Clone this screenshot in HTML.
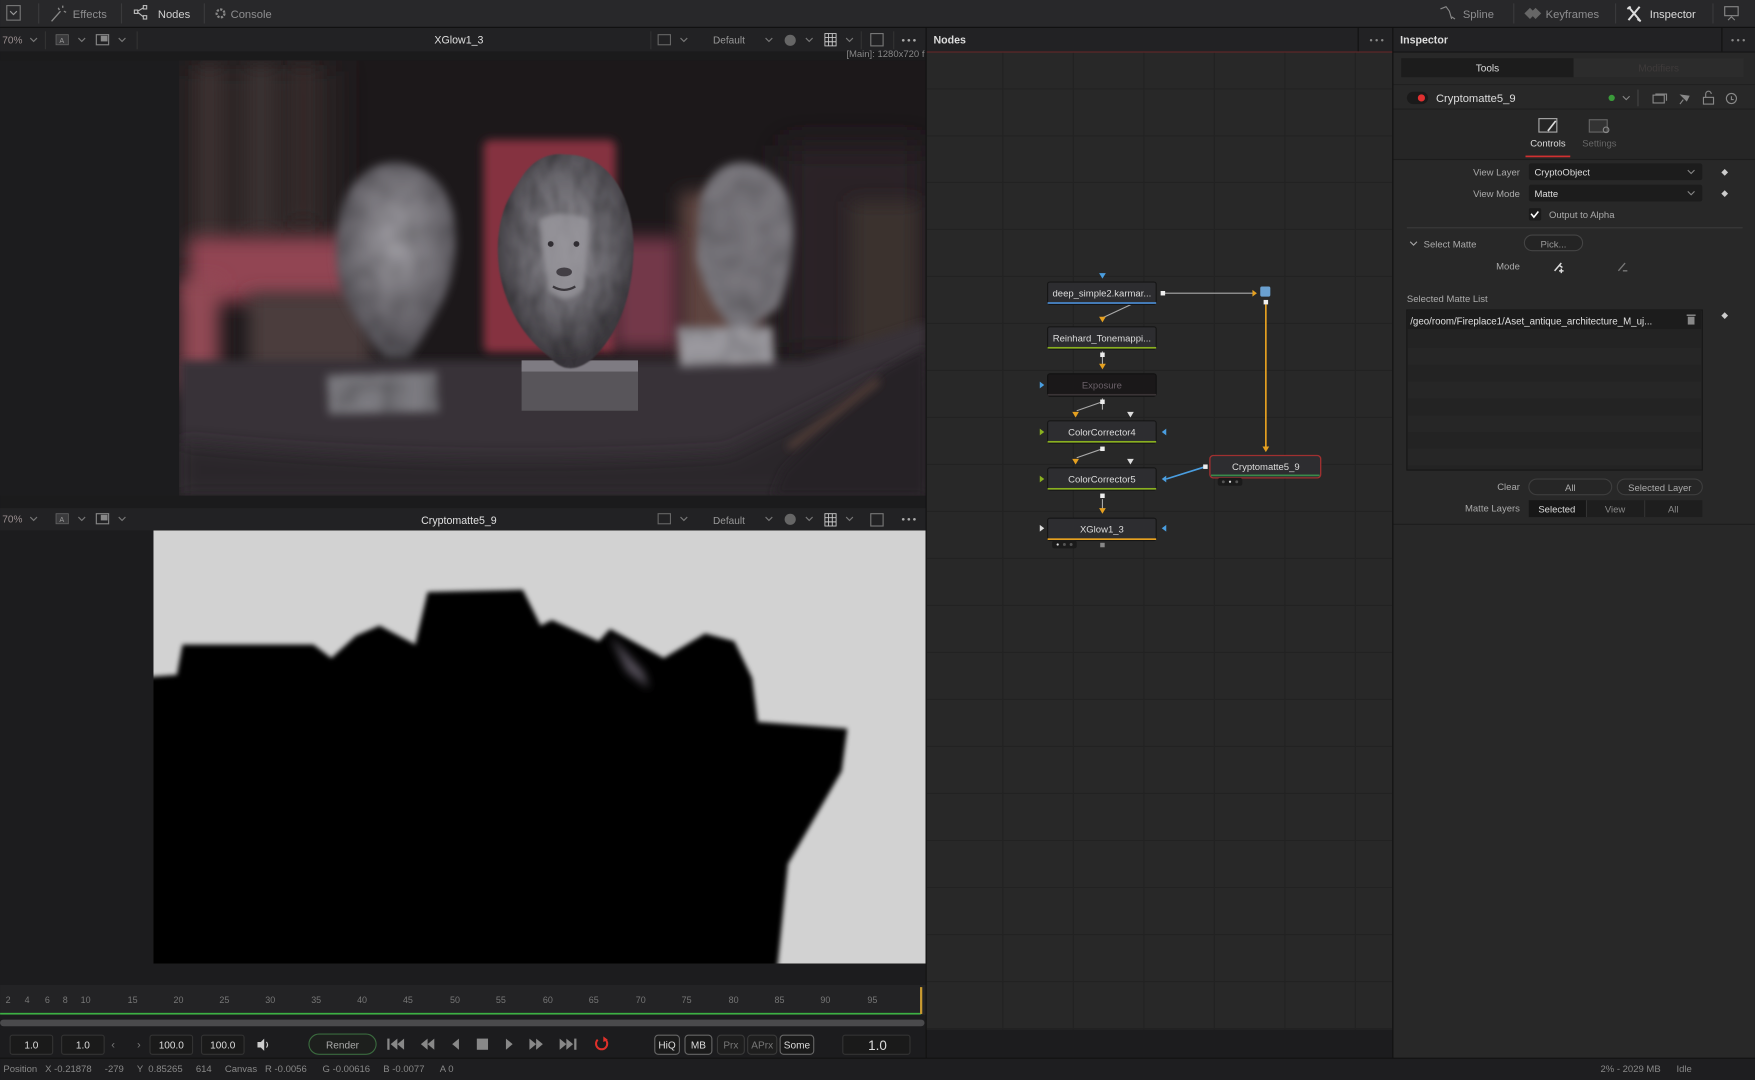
<!DOCTYPE html>
<html><head><meta charset="utf-8"><style>
html,body{margin:0;padding:0;background:#1c1c1e;overflow:hidden}
svg{display:block}
text{font-family:"Liberation Sans","DejaVu Sans",sans-serif}
</style></head><body>
<svg width="1755" height="1080" viewBox="0 0 1568 965" xmlns="http://www.w3.org/2000/svg">
<defs>
<filter id="b8" x="-50%" y="-50%" width="200%" height="200%"><feGaussianBlur stdDeviation="8"/></filter>
<filter id="b4" x="-50%" y="-50%" width="200%" height="200%"><feGaussianBlur stdDeviation="4"/></filter>
<filter id="b2" x="-20%" y="-20%" width="140%" height="140%"><feGaussianBlur stdDeviation="2.2"/></filter>
<filter id="b15" x="-50%" y="-50%" width="200%" height="200%"><feGaussianBlur stdDeviation="15"/></filter>
<filter id="tex" x="-10%" y="-10%" width="120%" height="120%">
<feTurbulence type="fractalNoise" baseFrequency="0.07 0.04" numOctaves="2" seed="3" result="n"/>
<feColorMatrix in="n" type="matrix" values="0 0 0 0 0  0 0 0 0 0  0 0 0 0 0  0 0 0 -0.9 0.55" result="a"/>
<feComposite in="a" in2="SourceAlpha" operator="in" result="sh"/>
<feMerge result="m"><feMergeNode in="SourceGraphic"/><feMergeNode in="sh"/></feMerge>
<feGaussianBlur in="m" stdDeviation="0.8"/>
</filter>
<filter id="texb" x="-20%" y="-20%" width="140%" height="140%">
<feTurbulence type="fractalNoise" baseFrequency="0.05" numOctaves="2" seed="7" result="n"/>
<feColorMatrix in="n" type="matrix" values="0 0 0 0 0  0 0 0 0 0  0 0 0 0 0  0 0 0 -0.9 0.55" result="a"/>
<feComposite in="a" in2="SourceAlpha" operator="in" result="sh"/>
<feMerge result="m"><feMergeNode in="SourceGraphic"/><feMergeNode in="sh"/></feMerge>
<feGaussianBlur in="m" stdDeviation="4"/>
</filter>
<clipPath id="ph"><rect x="160" y="54" width="667" height="389"/></clipPath>
<clipPath id="mt"><rect x="137" y="474" width="690" height="387"/></clipPath>
<radialGradient id="lion" cx="50%" cy="42%" r="55%"><stop offset="0" stop-color="#8e8c92"/><stop offset="0.6" stop-color="#67656b"/><stop offset="1" stop-color="#3a373c"/></radialGradient>
<radialGradient id="lionb" cx="50%" cy="40%" r="55%"><stop offset="0" stop-color="#a09ea4"/><stop offset="1" stop-color="#57545a"/></radialGradient>
</defs>

<rect width="1568" height="965" fill="#1c1c1e"/>

<!-- top toolbar -->
<rect x="0" y="0" width="1568" height="24" fill="#28282a"/>
<rect x="0" y="24" width="1568" height="1" fill="#111"/>
<rect x="6" y="5" width="12" height="13" fill="none" stroke="#777" stroke-width="1"/>
<path d="M9 10l3 3l3-3" stroke="#999" fill="none"/>
<rect x="34" y="3" width="1" height="18" fill="#3a3a3c"/>
<path d="M46 19l8-9M52 7l1 2M57 10l2 1M56 5v2" stroke="#888" stroke-width="1.2" fill="none"/>
<text x="65" y="16" font-size="10" fill="#8e8e90">Effects</text>
<rect x="108" y="3" width="1" height="18" fill="#3a3a3c"/>
<g stroke="#bbb" fill="none" stroke-width="1"><rect x="120" y="9" width="3" height="3"/><rect x="128" y="5" width="3" height="3"/><rect x="128" y="14" width="3" height="3"/><path d="M123 10l5-3M123 11l5 4"/></g>
<text x="141" y="16" font-size="10" fill="#d0d0d0">Nodes</text>
<rect x="182" y="3" width="1" height="18" fill="#3a3a3c"/>
<circle cx="197" cy="12" r="3.5" fill="none" stroke="#888" stroke-width="2" stroke-dasharray="2 1.2"/>
<text x="206" y="16" font-size="10" fill="#8e8e90">Console</text>

<path d="M1287 8l5-2l3 4l2 7M1297 15l3 2" stroke="#888" fill="none"/>
<text x="1307" y="16" font-size="10" fill="#8e8e90">Spline</text>
<rect x="1352" y="3" width="1" height="18" fill="#3a3a3c"/>
<path d="M1362 12l5-5l5 5l-5 5zM1367 12l5-5l5 5l-5 5z" fill="#666"/>
<text x="1381" y="16" font-size="10" fill="#8e8e90">Keyframes</text>
<rect x="1443" y="3" width="1" height="18" fill="#3a3a3c"/>
<path d="M1455 6l10 12M1465 6l-10 12M1454 8l3-2M1463 17l3 2" stroke="#ddd" stroke-width="1.8" fill="none"/>
<text x="1474" y="16" font-size="10" fill="#dcdcdc">Inspector</text>
<rect x="1530" y="3" width="1" height="18" fill="#3a3a3c"/>
<rect x="1541" y="6" width="12" height="8" fill="none" stroke="#888"/><path d="M1544 18l3-3l3 3" stroke="#888" fill="none"/>

<!-- viewer 1 header -->
<rect x="0" y="25" width="827" height="21" fill="#222224"/>
<rect x="0" y="46" width="827" height="8" fill="#1b1b1c"/>
<text x="2" y="39" font-size="9" fill="#9a8f90">70%</text>
<path d="M27 34l3 3l3-3" stroke="#777" fill="none"/>
<rect x="40" y="28" width="1" height="16" fill="#333"/>
<rect x="50" y="31" width="11" height="9" fill="#3a3a3c" stroke="#666" stroke-width=".7"/><text x="53" y="38.5" font-size="6.5" fill="#999">A</text>
<path d="M70 34l3 3l3-3" stroke="#777" fill="none"/>
<rect x="86" y="31" width="11" height="9" fill="none" stroke="#888"/><rect x="90" y="32" width="6" height="5" fill="#888"/>
<path d="M106 34l3 3l3-3" stroke="#777" fill="none"/>
<rect x="122" y="28" width="1" height="16" fill="#333"/>
<text x="410" y="39" font-size="9.5" fill="#e0e0e0" text-anchor="middle">XGlow1_3</text>
<rect x="581" y="28" width="1" height="16" fill="#333"/>
<rect x="588" y="31" width="11" height="9" fill="none" stroke="#666"/>
<path d="M608 34l3 3l3-3" stroke="#777" fill="none"/>
<text x="637" y="39" font-size="9" fill="#999">Default</text>
<path d="M684 34l3 3l3-3" stroke="#777" fill="none"/>
<circle cx="706" cy="36" r="5" fill="#666"/>
<path d="M720 34l3 3l3-3" stroke="#777" fill="none"/>
<g stroke="#ccc" stroke-width=".8" fill="none"><rect x="737" y="30" width="10" height="11"/><path d="M740.3 30v11M743.6 30v11M737 33.6h10M737 37.3h10"/></g>
<path d="M756 34l3 3l3-3" stroke="#777" fill="none"/>
<rect x="769" y="28" width="1" height="16" fill="#333"/>
<rect x="778" y="30" width="11" height="11" fill="none" stroke="#777"/>
<rect x="798" y="28" width="1" height="16" fill="#333"/>
<g fill="#aaa"><circle cx="807" cy="36" r="1.2"/><circle cx="812" cy="36" r="1.2"/><circle cx="817" cy="36" r="1.2"/></g>
<text x="826" y="51" font-size="8.5" fill="#888" text-anchor="end">[Main]: 1280x720 f</text>

<!-- photo -->
<g clip-path="url(#ph)">
<rect x="160" y="54" width="667" height="389" fill="#1c181a"/>
<rect x="160" y="54" width="140" height="190" fill="#2e2628" filter="url(#b15)"/>
<rect x="178" y="58" width="18" height="160" fill="#3c3232" filter="url(#b8)"/>
<rect x="222" y="58" width="22" height="150" fill="#3a3030" filter="url(#b8)"/>
<rect x="262" y="58" width="18" height="140" fill="#342b2c" filter="url(#b8)"/>
<rect x="700" y="130" width="127" height="190" fill="#2c2426" filter="url(#b15)"/>
<rect x="608" y="172" width="72" height="150" fill="#5e443f" filter="url(#b8)"/>
<rect x="760" y="180" width="60" height="140" fill="#3a302f" filter="url(#b8)"/>
<rect x="432" y="125" width="118" height="190" rx="6" fill="#85303f" filter="url(#b4)"/>
<rect x="168" y="212" width="165" height="58" rx="6" fill="#924452" filter="url(#b8)"/>
<rect x="160" y="250" width="36" height="100" fill="#924a55" filter="url(#b8)"/>
<rect x="222" y="262" width="110" height="75" fill="#4c3e3d" filter="url(#b8)"/>
<rect x="548" y="212" width="58" height="100" fill="#73394a" filter="url(#b8)"/>
<path d="M160 322 L720 322 L827 288 L827 443 L160 443 Z" fill="#373039" filter="url(#b4)"/>
<path d="M160 395 Q400 420 650 405 L780 340 L827 330 L827 443 L160 443 Z" fill="#2c252b" filter="url(#b8)"/>
<path d="M700 420 L790 330 L827 310 L827 443 L690 443 Z" fill="#282226" filter="url(#b4)"/>
<path d="M705 400 L785 340" stroke="#5e443b" stroke-width="5" filter="url(#b4)"/>
<g filter="url(#texb)">
<path d="M305 185 Q320 145 355 145 Q395 150 405 190 Q412 235 395 270 Q380 300 365 320 L345 320 Q320 295 305 260 Q295 225 305 185Z" fill="url(#lionb)"/>
<path d="M292 335 L390 332 L392 368 L294 370 Z" fill="#7c7a80"/>
</g>
<g filter="url(#texb)">
<path d="M625 180 Q635 145 665 145 Q700 150 708 190 Q712 235 695 275 L660 300 Q630 270 622 230Z" fill="#78767c"/>
<path d="M605 292 L690 292 L692 325 L608 328Z" fill="#9a989e"/>
</g>
<rect x="466" y="325" width="104" height="42" fill="#58555a"/>
<rect x="466" y="322" width="104" height="10" fill="#7e7b82"/>
<g filter="url(#tex)">
<path d="M462 165 Q478 135 505 138 Q535 138 552 165 Q570 195 565 240 Q560 290 530 320 Q508 338 492 320 Q455 292 446 242 Q440 195 462 165Z" fill="url(#lion)"/>
</g>
<path d="M482 196 Q502 186 526 196 L522 258 Q506 274 490 260 Z" fill="#9a989e" opacity=".75" filter="url(#b2)"/>
<circle cx="492" cy="218" r="2.6" fill="#302d32"/><circle cx="515" cy="218" r="2.6" fill="#302d32"/>
<ellipse cx="504" cy="243" rx="7" ry="4" fill="#433f45"/>
<path d="M494 256 Q504 262 514 256" stroke="#3a373c" stroke-width="2" fill="none"/>
</g>

<!-- viewer 2 header -->
<rect x="0" y="443" width="827" height="11" fill="#1b1b1c"/>
<rect x="0" y="454" width="827" height="20" fill="#222224"/>
<text x="2" y="467" font-size="9" fill="#9a8f90">70%</text>
<path d="M27 462l3 3l3-3" stroke="#777" fill="none"/>
<rect x="50" y="459" width="11" height="9" fill="#3a3a3c" stroke="#666" stroke-width=".7"/><text x="53" y="466.5" font-size="6.5" fill="#999">A</text>
<path d="M70 462l3 3l3-3" stroke="#777" fill="none"/>
<rect x="86" y="459" width="11" height="9" fill="none" stroke="#888"/><rect x="90" y="460" width="6" height="5" fill="#888"/>
<path d="M106 462l3 3l3-3" stroke="#777" fill="none"/>
<text x="410" y="468" font-size="9.5" fill="#e0e0e0" text-anchor="middle">Cryptomatte5_9</text>
<rect x="588" y="459" width="11" height="9" fill="none" stroke="#666"/>
<path d="M608 462l3 3l3-3" stroke="#777" fill="none"/>
<text x="637" y="468" font-size="9" fill="#999">Default</text>
<path d="M684 462l3 3l3-3" stroke="#777" fill="none"/>
<circle cx="706" cy="464" r="5" fill="#666"/>
<path d="M720 462l3 3l3-3" stroke="#777" fill="none"/>
<g stroke="#ccc" stroke-width=".8" fill="none"><rect x="737" y="459" width="10" height="11"/><path d="M740.3 459v11M743.6 459v11M737 462.6h10M737 466.3h10"/></g>
<path d="M756 462l3 3l3-3" stroke="#777" fill="none"/>
<rect x="778" y="459" width="11" height="11" fill="none" stroke="#777"/>
<g fill="#aaa"><circle cx="807" cy="464" r="1.2"/><circle cx="812" cy="464" r="1.2"/><circle cx="817" cy="464" r="1.2"/></g>

<!-- matte -->
<g clip-path="url(#mt)">
<rect x="137" y="474" width="690" height="387" fill="#d2d2d2"/>
<path d="M130 605 L158 603 L163 576 L280 576 L296 588 L318 568 L339 559 L371 576 L382 529 L467 527 L483 559 L493 554 L535 573 L545 562 L593 588 L630 566 L656 573 L672 606 L677 645 L757 651 L752 689 L704 772 L694 870 L130 870 Z" fill="#000" filter="url(#b2)"/>
<path d="M545 568 L575 600 L580 615 L560 600 Z" fill="#55505a" filter="url(#b4)"/>
</g>

<!-- timeline -->
<rect x="0" y="861" width="827" height="19" fill="#1c1c1e"/>
<rect x="0" y="880" width="827" height="27" fill="#232325"/>
<g font-size="8" fill="#777">
<text x="5" y="896">2</text><text x="22" y="896">4</text><text x="40" y="896">6</text><text x="56" y="896">8</text>
<text x="72" y="896">10</text><text x="114" y="896">15</text><text x="155" y="896">20</text><text x="196" y="896">25</text>
<text x="237" y="896">30</text><text x="319" y="896">40</text><text x="278" y="896">35</text><text x="360" y="896">45</text>
<text x="402" y="896">50</text><text x="443" y="896">55</text><text x="485" y="896">60</text><text x="526" y="896">65</text>
<text x="568" y="896">70</text><text x="609" y="896">75</text><text x="651" y="896">80</text><text x="692" y="896">85</text>
<text x="733" y="896">90</text><text x="775" y="896">95</text>
</g>
<rect x="0" y="905" width="823" height="1.5" fill="#3cb043"/>
<rect x="822" y="882" width="2" height="24" fill="#c89a30"/>
<rect x="0" y="911" width="826" height="6" rx="3" fill="#4a4a4c"/>
<rect x="0" y="920" width="1244" height="25" fill="#1c1c1e"/>
<g fill="#1a1a1a" stroke="#333">
<rect x="9" y="925" width="38" height="17" rx="2"/><rect x="55" y="925" width="38" height="17" rx="2"/>
<rect x="134" y="925" width="38" height="17" rx="2"/><rect x="180" y="925" width="38" height="17" rx="2"/>
<rect x="753" y="925" width="60" height="17" rx="2"/>
</g>
<g font-size="9" fill="#ddd" text-anchor="middle">
<text x="28" y="937">1.0</text><text x="74" y="937">1.0</text><text x="153" y="937">100.0</text><text x="199" y="937">100.0</text>
</g>
<text x="784" y="938" font-size="12" fill="#ddd" text-anchor="middle">1.0</text>
<text x="101" y="937" font-size="10" fill="#777" text-anchor="middle">‹</text><text x="124" y="937" font-size="10" fill="#777" text-anchor="middle">›</text>
<path d="M230 931h3l3-3v11l-3-3h-3z" fill="#ccc"/><path d="M238 931q2 2.5 0 5" stroke="#ccc" fill="none"/>
<rect x="276" y="924" width="60" height="18" rx="9" fill="#1d1f1d" stroke="#3a6a3e"/>
<text x="306" y="937" font-size="9" fill="#aaa" text-anchor="middle">Render</text>
<g fill="#888">
<rect x="346" y="928" width="2" height="10"/><path d="M355 928v10l-6-5zM361 928v10l-6-5z"/>
<path d="M382 928v10l-6-5zM388 928v10l-6-5z"/>
<path d="M410 928v10l-6-5z"/>
<rect x="426" y="928" width="10" height="10"/>
<path d="M452 928v10l6-5z"/>
<path d="M473 928v10l6-5zM479 928v10l6-5z"/>
<path d="M500 928v10l6-5zM506 928v10l6-5z"/><rect x="513" y="928" width="2" height="10"/>
</g>
<path d="M541 929a5 5 0 1 1 -7 0" stroke="#e0302a" stroke-width="1.8" fill="none"/><path d="M539 926l4 3l-4 2z" fill="#e0302a"/>
<g font-size="9" text-anchor="middle">
<rect x="585" y="925" width="22" height="17" rx="3" fill="#1a1a1a" stroke="#666"/><text x="596" y="937" fill="#ddd">HiQ</text>
<rect x="612" y="925" width="24" height="17" rx="3" fill="#1a1a1a" stroke="#666"/><text x="624" y="937" fill="#ddd">MB</text>
<rect x="641" y="925" width="24" height="17" rx="3" fill="#1e1e1e" stroke="#3a3a3a"/><text x="653" y="937" fill="#777">Prx</text>
<rect x="668" y="925" width="26" height="17" rx="3" fill="#1e1e1e" stroke="#3a3a3a"/><text x="681" y="937" fill="#777">APrx</text>
<rect x="697" y="925" width="30" height="17" rx="3" fill="#1a1a1a" stroke="#666"/><text x="712" y="937" fill="#ddd">Some</text>
</g>

<!-- status bar -->
<rect x="0" y="945" width="1568" height="20" fill="#1e1e20"/>
<rect x="0" y="945" width="1568" height="1" fill="#111"/>
<text x="3" y="958" font-size="8.5" fill="#888" xml:space="preserve">Position   X -0.21878     -279     Y  0.85265     614     Canvas   R -0.0056      G -0.00616     B -0.0077      A 0</text>
<text x="1430" y="958" font-size="8.5" fill="#888" xml:space="preserve">2% - 2029 MB      Idle</text>

<!-- Nodes panel -->
<rect x="827" y="25" width="1" height="920" fill="#111"/>
<rect x="828" y="25" width="416" height="21" fill="#222224"/>
<rect x="828" y="46" width="416" height="1" fill="#6a2a2a"/>
<text x="834" y="39" font-size="9.5" font-weight="bold" fill="#ddd">Nodes</text>
<rect x="1213" y="25" width="1" height="21" fill="#111"/>
<g fill="#888"><circle cx="1225" cy="36" r="1.1"/><circle cx="1230" cy="36" r="1.1"/><circle cx="1235" cy="36" r="1.1"/></g>
<rect x="828" y="47" width="416" height="873" fill="#282828"/>
<g stroke="#222" stroke-width="1">
<path d="M896 47v873M959 47v873M1022 47v873M1085 47v873M1148 47v873M1211 47v873"/>
<path d="M828 79.5h416M828 121.5h416M828 163h416M828 205h416M828 247h416M828 289h416M828 331h416M828 373h416M828 415h416M828 457h416M828 499h416M828 541h416M828 583h416M828 625h416M828 667h416M828 709h416M828 751h416M828 793h416M828 835h416M828 877h416M828 919h416"/>
</g>
<path d="M1039 262H1120" stroke="#aaa" stroke-width="1"/><path d="M1119 259l4 3l-4 3z" fill="#e5a020"/>
<path d="M1013 271L985 284" stroke="#aaa"/>
<path d="M985 314v12M985 356v10" stroke="#aaa"/>
<path d="M985 359L962 367" stroke="#aaa"/><path d="M985 401L962 409" stroke="#aaa"/>
<path d="M985 446v12" stroke="#aaa"/>
<path d="M1131 272v130" stroke="#e5a020" stroke-width="1.5"/>
<path d="M1077 417L1042 428" stroke="#4a9ee0" stroke-width="1.5"/>
<g fill="#e5a020">
<path d="M982 283h6l-3 5z"/><path d="M982 325h6l-3 5z"/><path d="M958 368h6l-3 5z"/><path d="M958 410h6l-3 5z"/><path d="M982 454h6l-3 5z"/><path d="M1128 399h6l-3 5z"/>
</g>
<g fill="#ddd"><path d="M1007 368h6l-3 5z"/><path d="M1007 410h6l-3 5z"/><path d="M929 469v6l4-3z"/></g>
<path d="M982 244h6l-3 5z" fill="#4a9ee0"/>
<g fill="#4a9ee0"><path d="M929 341v6l4-3z"/><path d="M1042 383v6l-4-3z"/><path d="M1042 425v6l-4-3z"/><path d="M1042 469v6l-4-3z"/></g>
<g fill="#8ab020"><path d="M929 383v6l4-3z"/><path d="M929 425v6l4-3z"/></g>
<g font-size="8.5" text-anchor="middle">
<rect x="936" y="252" width="97" height="20" rx="2" fill="#2d2d30" stroke="#151515"/><rect x="936" y="270" width="97" height="1.5" fill="#4a8ad0"/>
<text x="984.5" y="265" fill="#ddd">deep_simple2.karmar...</text>
<rect x="936" y="292" width="97" height="20" rx="2" fill="#2d2d30" stroke="#151515"/><rect x="936" y="310" width="97" height="1.5" fill="#8ab020"/>
<text x="984.5" y="305" fill="#ddd">Reinhard_Tonemappi...</text>
<rect x="936" y="334" width="97" height="20" rx="2" fill="#1a1819" stroke="#111"/><rect x="936" y="352" width="97" height="1.5" fill="#3a3436"/>
<text x="984.5" y="347" fill="#6a6068">Exposure</text>
<rect x="936" y="376" width="97" height="20" rx="2" fill="#2d2d30" stroke="#151515"/><rect x="936" y="394" width="97" height="1.5" fill="#8ab020"/>
<text x="984.5" y="389" fill="#ddd">ColorCorrector4</text>
<rect x="936" y="418" width="97" height="20" rx="2" fill="#2d2d30" stroke="#151515"/><rect x="936" y="436" width="97" height="1.5" fill="#8ab020"/>
<text x="984.5" y="431" fill="#ddd">ColorCorrector5</text>
<rect x="936" y="463" width="97" height="20" rx="2" fill="#2d2d30" stroke="#151515"/><rect x="936" y="481" width="97" height="1.5" fill="#e5a020"/>
<text x="984.5" y="476" fill="#ddd">XGlow1_3</text>
<rect x="1081" y="407" width="99" height="20" rx="3" fill="#2d2d30" stroke="#a03030" stroke-width="1.2"/><rect x="1082" y="424" width="97" height="1.5" fill="#3a8a4a"/>
<text x="1131" y="420" fill="#ddd">Cryptomatte5_9</text>
</g>
<g fill="#eee">
<rect x="1037" y="260" width="4" height="4"/><rect x="983" y="315" width="4" height="4"/><rect x="983" y="357" width="4" height="4"/>
<rect x="983" y="399" width="4" height="4"/><rect x="983" y="441" width="4" height="4"/><rect x="1129" y="268" width="4" height="4"/><rect x="1075" y="415" width="4" height="4"/>
</g>
<rect x="983" y="485" width="4" height="4" fill="#888"/>
<rect x="1126" y="256" width="9" height="9" rx="1.5" fill="#6aa0d0"/>
<rect x="940" y="483" width="22" height="7" rx="2" fill="#1a1a1a"/><circle cx="945" cy="486.5" r="1" fill="#ddd"/><g fill="#555"><circle cx="951" cy="486.5" r="1.3"/><circle cx="957" cy="486.5" r="1.3"/></g>
<rect x="1088" y="427" width="22" height="7" rx="2" fill="#1a1a1a"/><g fill="#555"><circle cx="1093" cy="430.5" r="1.3"/><circle cx="1105" cy="430.5" r="1.3"/></g><circle cx="1099" cy="430.5" r="1" fill="#ddd"/>

<!-- Inspector -->
<rect x="1244" y="25" width="1" height="920" fill="#111"/>
<rect x="1245" y="25" width="323" height="920" fill="#282828"/>
<rect x="1245" y="25" width="323" height="21" fill="#222224"/>
<rect x="1245" y="46" width="323" height="1" fill="#161616"/>
<text x="1251" y="39" font-size="9.5" font-weight="bold" fill="#ddd">Inspector</text>
<rect x="1538" y="25" width="1" height="21" fill="#111"/>
<g fill="#888"><circle cx="1548" cy="36" r="1.1"/><circle cx="1553" cy="36" r="1.1"/><circle cx="1558" cy="36" r="1.1"/></g>
<rect x="1252" y="52" width="154" height="17" fill="#1c1c1c"/>
<rect x="1406" y="52" width="152" height="17" fill="#2c2c2c"/>
<text x="1329" y="64" font-size="9" fill="#ddd" text-anchor="middle">Tools</text>
<text x="1482" y="64" font-size="9" fill="#3e3a3a" text-anchor="middle">Modifiers</text>
<rect x="1245" y="75" width="323" height="1" fill="#202020"/>
<rect x="1257" y="82" width="19" height="11" rx="5.5" fill="#1a1a1a"/><circle cx="1270" cy="87.5" r="3.2" fill="#e03030"/>
<text x="1283" y="91" font-size="10" fill="#ddd">Cryptomatte5_9</text>
<circle cx="1440" cy="87.5" r="2.8" fill="#3a9a3a"/><path d="M1450 86l3 3l3-3" stroke="#888" fill="none"/>
<rect x="1463" y="80" width="1" height="15" fill="#444"/>
<rect x="1477" y="85" width="10" height="7" fill="none" stroke="#888"/><path d="M1479 84h10v6" stroke="#888" fill="none"/>
<path d="M1501 93l3-4M1502 85l5 5l2-4z" stroke="#888" fill="#888"/>
<rect x="1522" y="87" width="9" height="6" fill="none" stroke="#888"/><path d="M1524 87v-3a2.5 2.5 0 0 1 5 0" stroke="#888" fill="none"/>
<circle cx="1547" cy="88" r="4.5" fill="none" stroke="#888"/><path d="M1547 86v3h2" stroke="#888" fill="none"/>
<rect x="1245" y="97" width="323" height="1" fill="#1e1e1e"/>
<rect x="1245" y="98" width="323" height="44" fill="#262626"/>
<rect x="1375" y="106" width="16" height="12" fill="none" stroke="#aaa"/><path d="M1383 117l7-9" stroke="#ddd" stroke-width="1.5"/>
<text x="1383" y="131" font-size="8.5" fill="#ddd" text-anchor="middle">Controls</text>
<rect x="1363" y="139" width="40" height="1.5" fill="#d03030"/>
<rect x="1420" y="107" width="16" height="11" fill="#333" stroke="#666"/><circle cx="1435" cy="116" r="2.5" fill="none" stroke="#888"/>
<text x="1429" y="131" font-size="8.5" fill="#666" text-anchor="middle">Settings</text>
<rect x="1245" y="142" width="323" height="1" fill="#1c1c1c"/>
<g font-size="8.5" fill="#aaa" text-anchor="end">
<text x="1358" y="157">View Layer</text><text x="1358" y="176">View Mode</text><text x="1358" y="241">Mode</text>
<text x="1358" y="438">Clear</text><text x="1358" y="457">Matte Layers</text>
</g>
<rect x="1366" y="146" width="155" height="15" rx="2" fill="#1c1c1c"/><text x="1371" y="157" font-size="8.5" fill="#ddd">CryptoObject</text><path d="M1508 152l3 3l3-3" stroke="#888" fill="none"/>
<rect x="1366" y="165" width="155" height="15" rx="2" fill="#1c1c1c"/><text x="1371" y="176" font-size="8.5" fill="#ddd">Matte</text><path d="M1508 171l3 3l3-3" stroke="#888" fill="none"/>
<g fill="#ccc"><path d="M1541 151l3 3l-3 3l-3-3z"/><path d="M1541 170l3 3l-3 3l-3-3z"/><path d="M1541 279l3 3l-3 3l-3-3z"/></g>
<rect x="1366" y="186" width="11" height="11" rx="1.5" fill="#1a1a1a"/><path d="M1368 191l2.5 3l4-5" stroke="#fff" stroke-width="1.4" fill="none"/>
<text x="1384" y="195" font-size="8.5" fill="#aaa">Output to Alpha</text>
<rect x="1257" y="203" width="300" height="1" fill="#3a3a3a"/>
<path d="M1260 216l3 3l3-3" stroke="#aaa" fill="none"/>
<text x="1272" y="221" font-size="8.5" fill="#aaa">Select Matte</text>
<rect x="1362" y="210" width="52" height="14" rx="7" fill="#242424" stroke="#444"/>
<text x="1388" y="221" font-size="8.5" fill="#999" text-anchor="middle">Pick...</text>
<path d="M1389 242l6-7M1393 237l3 2M1395 240v4M1393 242h4" stroke="#ddd" stroke-width="1.3" fill="none"/>
<path d="M1446 242l6-7M1450 242h4" stroke="#777" stroke-width="1.2" fill="none"/>
<text x="1257" y="270" font-size="8.5" fill="#aaa">Selected Matte List</text>
<rect x="1257" y="277" width="264" height="143" fill="#232323" stroke="#161616"/>
<rect x="1258" y="278" width="262" height="16" fill="#1c1c1c"/>
<g fill="#262626"><rect x="1258" y="311" width="262" height="15"/><rect x="1258" y="341" width="262" height="15"/><rect x="1258" y="371" width="262" height="15"/><rect x="1258" y="401" width="262" height="15"/></g>
<text x="1260" y="290" font-size="8.7" fill="#e0e0e0">/geo/room/Fireplace1/Aset_antique_architecture_M_uj...</text>
<rect x="1508" y="283" width="6" height="7" fill="#888"/><rect x="1507" y="281" width="8" height="1.3" fill="#888"/>
<rect x="1366" y="428" width="74" height="14" rx="7" fill="#262626" stroke="#3e3e3e"/><text x="1403" y="438.5" font-size="8.5" fill="#aaa" text-anchor="middle">All</text>
<rect x="1445" y="428" width="76" height="14" rx="7" fill="#262626" stroke="#3e3e3e"/><text x="1483" y="438.5" font-size="8.5" fill="#aaa" text-anchor="middle">Selected Layer</text>
<rect x="1366" y="447" width="155" height="15" fill="#1e1e1e"/>
<rect x="1366" y="447" width="51" height="15" fill="#171717"/>
<rect x="1417" y="447" width="1" height="15" fill="#333"/><rect x="1469" y="447" width="1" height="15" fill="#333"/>
<text x="1391" y="458" font-size="8.5" fill="#ddd" text-anchor="middle">Selected</text>
<text x="1443" y="458" font-size="8.5" fill="#888" text-anchor="middle">View</text>
<text x="1495" y="458" font-size="8.5" fill="#888" text-anchor="middle">All</text>
<rect x="1245" y="468" width="323" height="1" fill="#1e1e1e"/>
</svg>
</body></html>
